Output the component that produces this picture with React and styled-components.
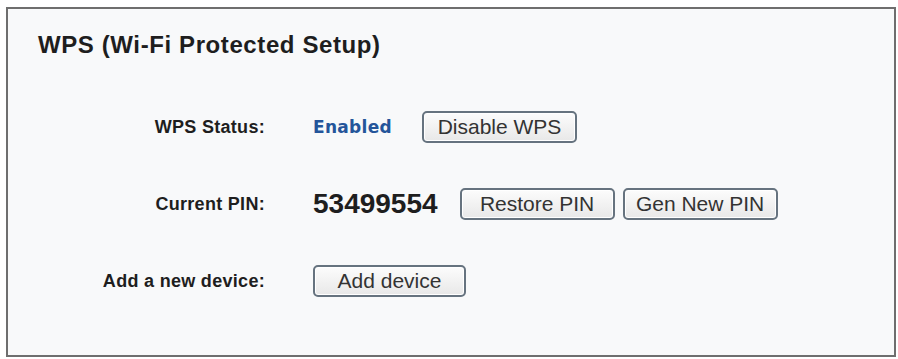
import React from "react";
import styled, { createGlobalStyle } from "styled-components";

const GlobalStyle = createGlobalStyle`
    html, body {
        margin: 0;
        padding: 0;
        background: #ffffff;
    }
    body {
        font-family: "Liberation Sans", Arial, sans-serif;
        color: #222;
    }
`;

const Page = styled.div`
    width: 898px;
    height: 359px;
    box-sizing: border-box;
    padding: 7px 2px 2px 6px;
`;

const Panel = styled.div`
    height: 100%;
    box-sizing: border-box;
    border: 2px solid #6e6e6e;
    background: #f8f9fa;
    padding: 22px 0 0 0;
`;

const Title = styled.h2`
    margin: 0 0 0 30px;
    font-size: 24px;
    line-height: 28px;
    font-weight: bold;
    letter-spacing: 0.6px;
    color: #1e1e1e;
`;

const Rows = styled.div`
    margin-top: 52px;
    display: flex;
    flex-direction: column;
    gap: 45px;
`;

const Row = styled.div`
    display: flex;
    align-items: center;
    height: 32px;
`;

const Label = styled.div`
    width: 257px;
    margin-right: 48px;
    text-align: right;
    font-size: 18px;
    font-weight: bold;
    letter-spacing: 0.3px;
    color: #1e1e1e;
    white-space: nowrap;
`;

const Status = styled.span`
    font-family: "DejaVu Sans", Verdana, sans-serif;
    font-size: 17px;
    font-weight: bold;
    letter-spacing: 0.3px;
    color: #24559a;
    margin-right: 30px;
`;

const Pin = styled.span`
    font-size: 28px;
    font-weight: bold;
    color: #1e1e1e;
    margin-right: 22px;
`;

const Buttons = styled.div`
    display: flex;
    gap: 8px;
`;

const Button = styled.button`
    width: ${(p) => p.$w || 155}px;
    height: 32px;
    box-sizing: border-box;
    border: 2px solid #66737f;
    border-radius: 5px;
    background: linear-gradient(#fcfcfc, #e8e8e8);
    box-shadow: inset 0 0 0 1px #ffffff;
    font-family: "Liberation Sans", Arial, sans-serif;
    font-size: 21px;
    color: #333;
    padding: 0;
    cursor: pointer;
`;

export default function App() {
    return (
        <>
            <GlobalStyle />
            <Page>
                <Panel>
                    <Title>WPS (Wi-Fi Protected Setup)</Title>
                    <Rows>
                        <Row>
                            <Label>WPS Status:</Label>
                            <Status>Enabled</Status>
                            <Button>Disable WPS</Button>
                        </Row>
                        <Row>
                            <Label>Current PIN:</Label>
                            <Pin>53499554</Pin>
                            <Buttons>
                                <Button>Restore PIN</Button>
                                <Button>Gen New PIN</Button>
                            </Buttons>
                        </Row>
                        <Row>
                            <Label>Add a new device:</Label>
                            <Button $w={153}>Add device</Button>
                        </Row>
                    </Rows>
                </Panel>
            </Page>
        </>
    );
}
